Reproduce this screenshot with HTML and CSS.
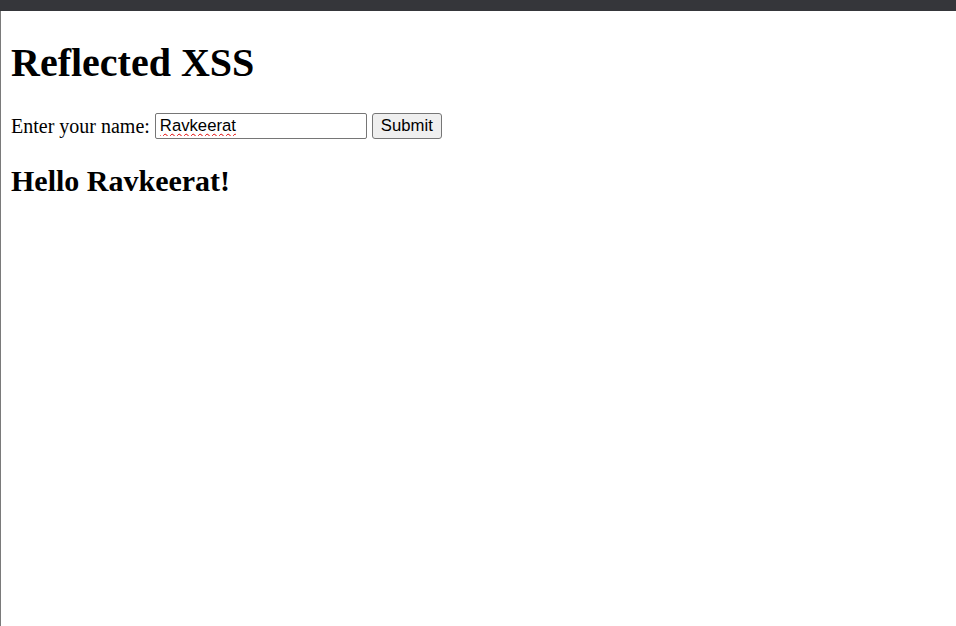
FILE: index.html
```html
<!DOCTYPE html>
<html>
<head>
<meta charset="utf-8">
<title>Reflected XSS</title>
<link rel="stylesheet" href="styles.css">
</head>
<body>
<div class="topbar"></div>
<div class="page">
  <h1 class="title">Reflected XSS</h1>
  <form class="form">
    <label class="label" for="name">Enter your name:</label>
    <input class="field" id="name" type="text" value="Ravkeerat" spellcheck="false">
    <button class="btn" type="button">Submit</button>
  </form>
  <h2 class="greeting">Hello Ravkeerat!</h2>
</div>
</body>
</html>
```
FILE: styles.css
```css
html, body {
  margin: 0;
  padding: 0;
  height: 100%;
  background: #fff;
}
body {
  display: flex;
  flex-direction: column;
  font-family: "Liberation Serif", "Times New Roman", serif;
  color: #000;
}
.topbar {
  height: 11px;
  background: #35363a;
  flex: none;
}
.page {
  flex: 1;
  border-left: 1px solid #7a7a7a;
  padding: 10px 10px;
  display: flow-root;
}
.title {
  font-size: 40px;
  font-weight: bold;
  margin: 19px 0 0 0;
  line-height: 46px;
}
.form {
  display: flex;
  align-items: center;
  margin: 27px 0 0 0;
  font-size: 20px;
}
.label {
  margin-right: 5px;
}
.field {
  width: 202px;
  height: 22px;
  box-sizing: content-box;
  border: 1px solid #767676;
  border-radius: 2px;
  padding: 1px 4px;
  font-family: "Liberation Sans", Arial, sans-serif;
  font-size: 16.7px;
  color: #000;
  text-decoration: underline wavy #e00000;
  text-decoration-thickness: 1px;
  text-underline-offset: 2px;
  margin: 0 5px 0 0;
  outline: none;
}
.btn {
  height: 26px;
  padding: 0 8px;
  border: 1px solid #767676;
  border-radius: 3px;
  background: #efefef;
  font-family: "Liberation Sans", Arial, sans-serif;
  font-size: 16.7px;
  color: #000;
}
.greeting {
  font-size: 30px;
  font-weight: bold;
  margin: 25px 0 0 0;
  line-height: 34px;
}
```
